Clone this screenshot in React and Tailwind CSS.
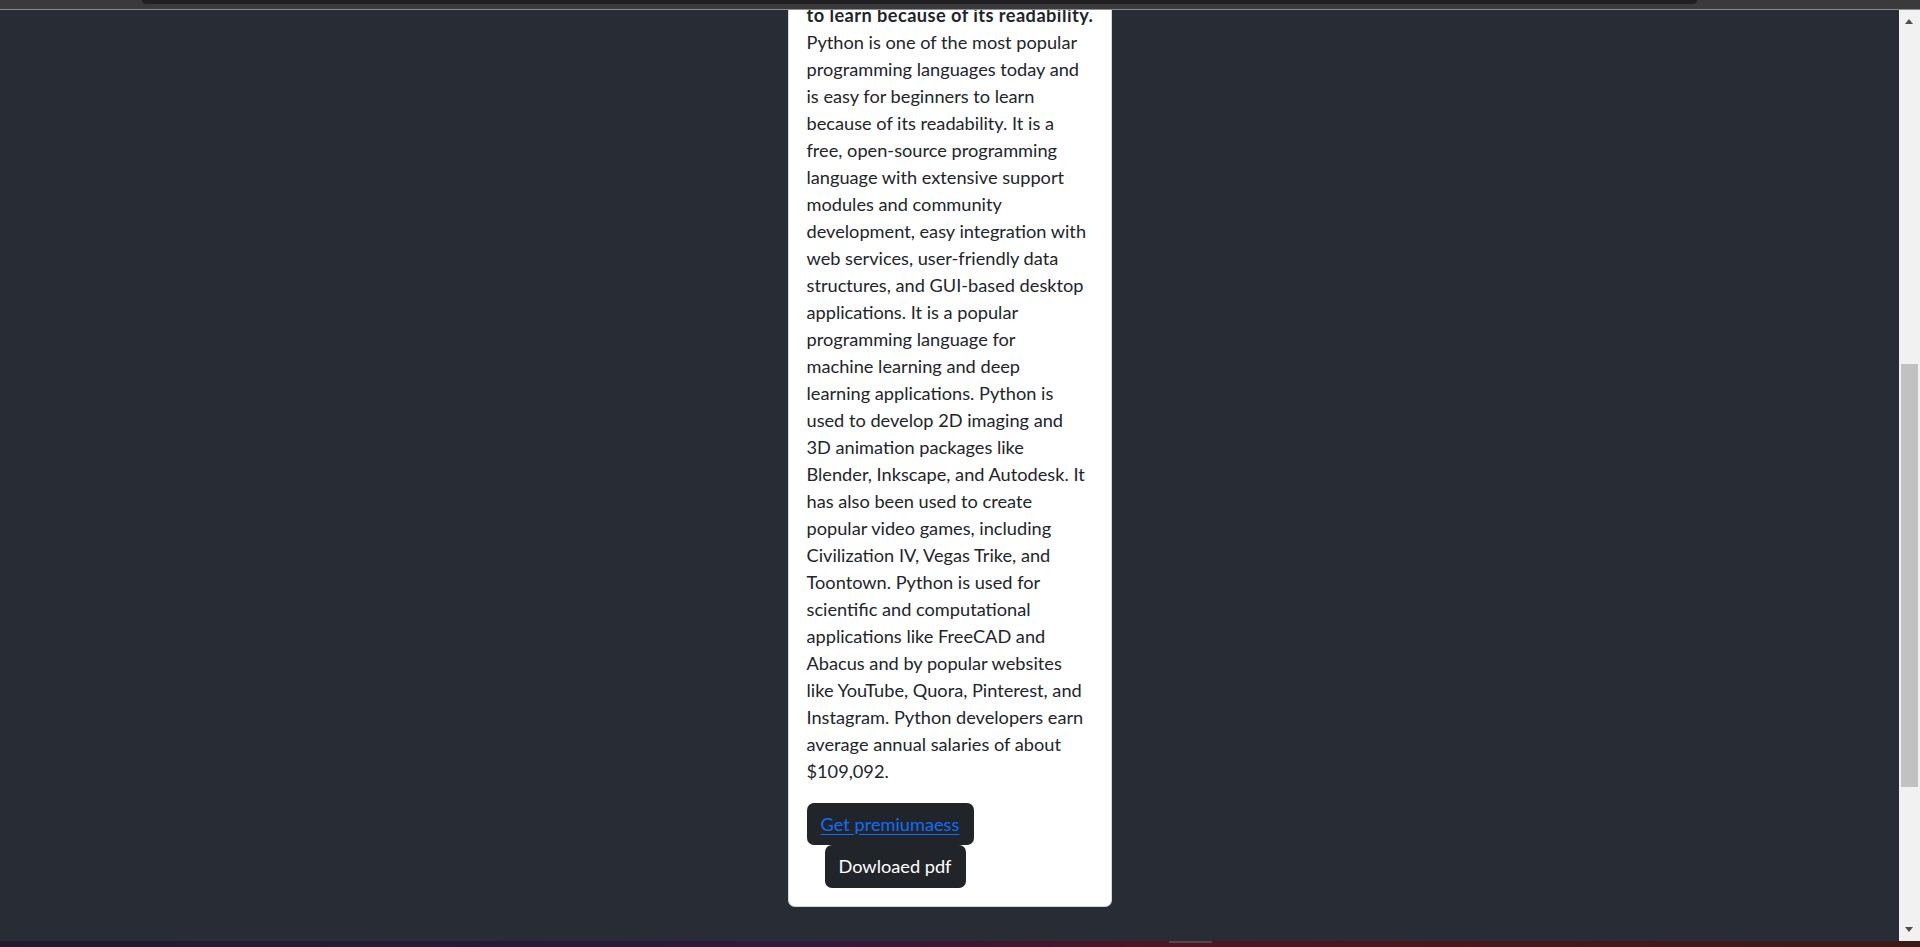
import React from "react";

const lines = [
  "Python is one of the most popular",
  "programming languages today and",
  "is easy for beginners to learn",
  "because of its readability. It is a",
  "free, open-source programming",
  "language with extensive support",
  "modules and community",
  "development, easy integration with",
  "web services, user-friendly data",
  "structures, and GUI-based desktop",
  "applications. It is a popular",
  "programming language for",
  "machine learning and deep",
  "learning applications. Python is",
  "used to develop 2D imaging and",
  "3D animation packages like",
  "Blender, Inkscape, and Autodesk. It",
  "has also been used to create",
  "popular video games, including",
  "Civilization IV, Vegas Trike, and",
  "Toontown. Python is used for",
  "scientific and computational",
  "applications like FreeCAD and",
  "Abacus and by popular websites",
  "like YouTube, Quora, Pinterest, and",
  "Instagram. Python developers earn",
  "average annual salaries of about",
  "$109,092.",
];

export default function App() {
  return (
    <div
      className="w-[1920px] h-[947px] overflow-hidden flex flex-col bg-[#282c34]"
      style={{ fontFamily: "Lato, 'Open Sans', sans-serif" }}
    >
      {/* browser chrome edge */}
      <div className="relative h-[9px] shrink-0 bg-[#3a3a3d]">
        <div className="absolute left-[142px] top-0 w-[1555px] h-[4px] rounded-b-[5px] bg-[#202023]" />
      </div>
      <div className="h-px shrink-0 bg-[#8c8c8c]" />

      <div className="flex-1 flex min-h-0">
        <main className="flex-1 flex justify-center overflow-hidden">
          <div className="self-start -mt-[8px] w-[324px] bg-white border border-[#d6d6d6] border-t-0 rounded-b-[7px] px-[18px] pb-[18px] text-[#212529] text-[18.2px] leading-[27px]">
            <div className="font-bold whitespace-nowrap tracking-[0.45px]">to learn because of its readability.</div>
            <p className="mb-[18px]">
              {lines.map((l, i) => (
                <span key={i} className="block whitespace-nowrap">
                  {l}
                </span>
              ))}
            </p>
            <div className="flex flex-col items-start">
              <button className="w-[167px] h-[42px] rounded-[7px] bg-[#212529] text-center">
                <a href="#" className="text-[#0d6efd] underline underline-offset-[3px]">
                  Get premiumaess
                </a>
              </button>
              <button className="ml-[18px] w-[141px] h-[43px] rounded-[7px] bg-[#212529] text-white text-center">
                Dowloaed pdf
              </button>
            </div>
          </div>
        </main>

        {/* scrollbar */}
        <div className="relative w-[21px] shrink-0 bg-[#f1f1f1]">
          <div className="absolute left-[6px] top-[9px] w-0 h-0 border-l-[4.5px] border-r-[4.5px] border-b-[5px] border-l-transparent border-r-transparent border-b-[#505050]" />
          <div className="absolute left-[2px] top-[354px] w-[17px] h-[423px] bg-[#c1c1c1]" />
          <div className="absolute left-[6px] top-[917px] w-0 h-0 border-l-[4.5px] border-r-[4.5px] border-t-[5px] border-l-transparent border-r-transparent border-t-[#505050]" />
        </div>
      </div>

      {/* desktop strip */}
      <div className="relative h-[6px] shrink-0 bg-[linear-gradient(90deg,#1f1b2d_0%,#251a36_25%,#30193e_40%,#3d1634_50%,#4c1524_60%,#48171b_75%,#3b1b16_100%)]">
        <div className="absolute left-[1169px] top-0 w-[43px] h-[2px] bg-[#5b4446]" />
      </div>
    </div>
  );
}
